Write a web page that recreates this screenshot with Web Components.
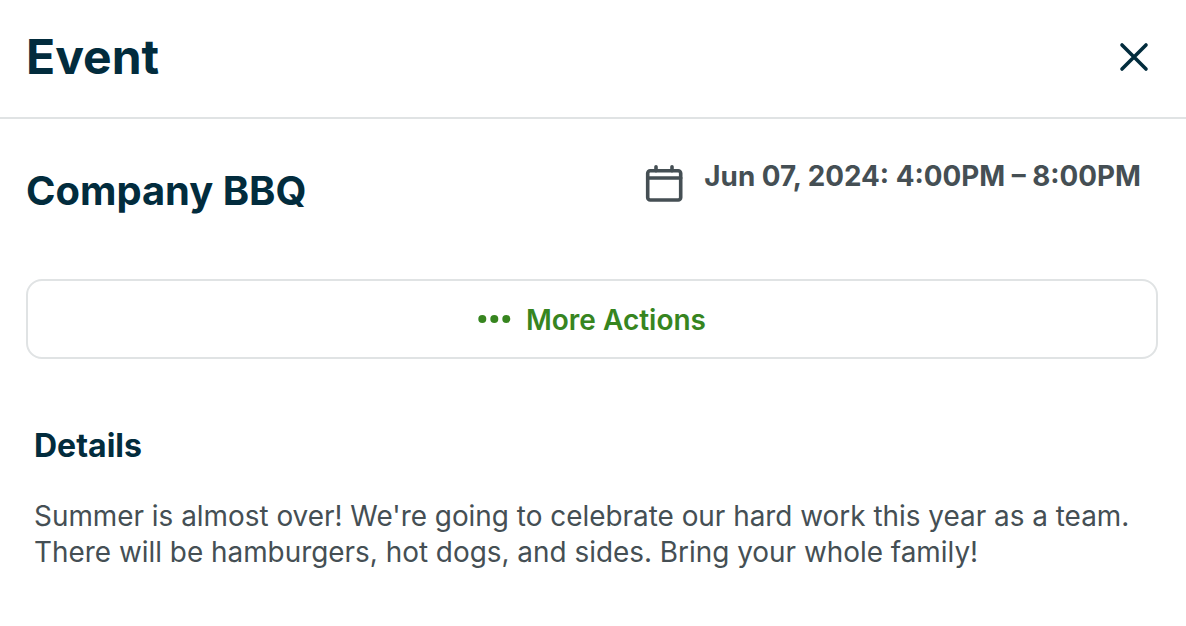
<!doctype html>
<html><head><meta charset="utf-8"><style>
html,body{margin:0;padding:0;background:#fff;}
body{font-family:Inter,"Liberation Sans",sans-serif;width:1186px;height:626px;overflow:hidden;}
</style></head><body>
<event-panel></event-panel>
<script>
function def(name, html){customElements.define(name, class extends HTMLElement{constructor(){super();this.attachShadow({mode:'open'}).innerHTML=html;}});}
def('panel-header',`<style>
:host{display:flex;align-items:center;justify-content:space-between;height:117px;padding:0 36px 0 26px;border-bottom:2px solid #e0e3e4;box-sizing:content-box;}
h1{margin:0 0 3px;font:700 48px/1 Inter,sans-serif;color:#022c3d}
svg{display:block;margin-bottom:3px}
</style><h1><slot></slot></h1><svg width="32" height="32" viewBox="0 0 32 32" fill="none" stroke="#022c3d" stroke-width="3.6" stroke-linecap="round"><path d="M4 4L28 28M28 4L4 28"/></svg>`);
def('event-summary',`<style>
:host{display:flex;justify-content:space-between;padding:0 45px 0 26px;height:160px;box-sizing:border-box}
h2{margin:48px 0 0;font:700 39.9px/1.2 Inter,sans-serif;color:#022c3d}
.d{display:flex;gap:20px;margin-top:40px;align-self:flex-start;font:700 27.8px/34px Inter,sans-serif;color:#454f54}
svg{display:block;margin-top:4px}
</style><h2><slot></slot></h2><div class="d"><svg width="40" height="40" viewBox="0 0 40 40" fill="none" stroke="#454f54" stroke-width="3.6" stroke-linecap="round"><rect x="3.7" y="7.7" width="33" height="29.3" rx="2.5"/><path d="M3.7 15H36.7M12 3.7V7.7M28 3.7V7.7"/></svg><span><slot name="date"></slot></span></div>`);
def('action-button',`<style>
:host{display:flex;align-items:center;justify-content:center;gap:14px;margin:0 28px 0 26px;height:80px;padding-top:1px;box-sizing:border-box;border:2px solid #e0e3e4;border-radius:16px;font:600 28px/1 Inter,sans-serif;color:#37851f}
svg{display:block;margin-top:-1px}
</style><svg width="34" height="10" viewBox="0.7 0 34 10" fill="#37851f"><circle cx="5" cy="5" r="4"/><circle cx="17" cy="5" r="4"/><circle cx="29" cy="5" r="4"/></svg><slot></slot>`);
def('details-section',`<style>
:host{display:block;padding:0 34px;margin-top:69px}
h3{margin:0 0 34px;font:700 32px/36px Inter,sans-serif;color:#022c3d}
p{margin:0;font:400 27.9px/36px Inter,sans-serif;color:#454f54}
</style><h3><slot name="title"></slot></h3><p><slot></slot></p>`);
def('event-panel',`<style>:host{display:block;width:1186px;height:626px;background:#fff}</style>
<panel-header>Event</panel-header>
<event-summary>Company BBQ<span slot="date">Jun 07, 2024: 4:00PM – 8:00PM</span></event-summary>
<action-button>More Actions</action-button>
<details-section><span slot="title">Details</span>Summer is almost over! We're going to celebrate our hard work this year as a team.<br>There will be hamburgers, hot dogs, and sides. Bring your whole family!</details-section>`);
</script></body></html>
